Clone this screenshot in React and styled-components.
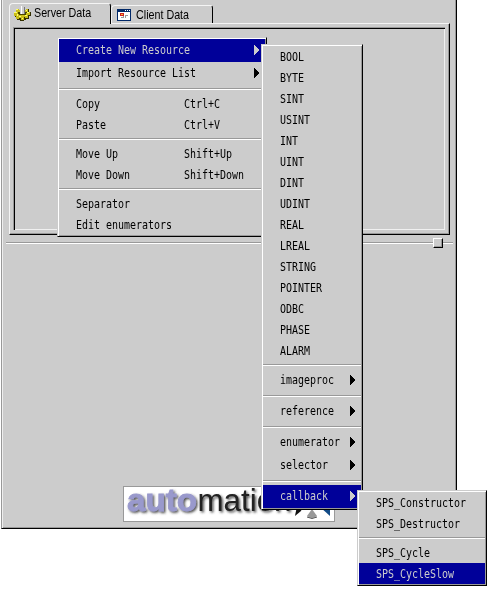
import React from 'react';
import styled, { createGlobalStyle } from 'styled-components';

const face = '#cccccc';
const shade = '#999999';
const navy = '#000099';

const GlobalStyle = createGlobalStyle`
  * { box-sizing: border-box; }
  body { margin: 0; background: #fff; overflow: hidden; }
`;

const Desktop = styled.main`
  position: relative;
  width: 492px;
  height: 589px;
  overflow: hidden;
  padding-left: 1px;
  background: #fff;
`;

const Window = styled.section`
  display: flex;
  flex-direction: column;
  width: 456px;
  height: 529px;
  padding: 3px 5px 0 5px;
  background: ${face};
  border-left: 1px solid ${shade};
  border-right: 1px solid #000;
  border-bottom: 1px solid #000;
  box-shadow: inset 1px 0 0 #eee, inset -1px -1px 0 ${shade};
`;

const Tabs = styled.nav`
  display: flex;
  align-items: flex-end;
  height: 20px;
  margin-left: 2px;
`;

const Tab = styled.button`
  display: flex;
  align-items: center;
  width: ${(p) => p.$width}px;
  height: ${(p) => (p.$active ? 21 : 18)}px;
  margin: 0 0 ${(p) => (p.$active ? -1 : 0)}px;
  padding: 0 0 ${(p) => (p.$active ? 2 : 0)}px ${(p) => (p.$active ? 4 : 5)}px;
  gap: ${(p) => (p.$active ? 3 : 5)}px;
  background: ${face};
  border: 1px solid #f4f4f4;
  border-right-color: #000;
  border-bottom: 0;
  border-radius: 4px 3px 0 0;
  z-index: ${(p) => (p.$active ? 1 : 0)};
`;

const TabLabel = styled.span`
  font: 13px/16px "Liberation Sans", sans-serif;
  color: #000;
  white-space: nowrap;
  transform: scaleX(0.825);
  transform-origin: left center;
`;

const Sheet = styled.div`
  width: 441px;
  height: 212px;
  margin-left: 2px;
  padding: 3px;
  border: 1px solid #f4f4f4;
  border-right-color: #000;
  border-bottom-color: #000;
  box-shadow: inset -1px -1px 0 ${shade};
`;

const Well = styled.div`
  width: 432px;
  height: 203px;
  border: 1px solid ${shade};
  border-right: 0;
  border-bottom: 0;
  box-shadow: inset 1px 1px 0 #000, inset -1px -1px 0 #f0f0f0;
`;

const Splitter = styled.div`
  display: flex;
  align-items: center;
  margin: 3px 2px 0 -1px;
  height: 10px;
  width: 447px;
`;

const Groove = styled.hr`
  flex: ${(p) => (p.$width ? `0 0 ${p.$width}px` : '1')};
  height: 2px;
  margin: 0;
  border: 0;
  border-top: 1px solid ${shade};
  background: #fff;
`;

const Handle = styled.span`
  width: 10px;
  height: 10px;
  border: 1px solid #fff;
  border-right-color: #000;
  border-bottom-color: #000;
  box-shadow: inset -1px -1px 0 ${shade};
`;

const LogoPlate = styled.div`
  width: 212px;
  height: 36px;
  margin: auto 0 6px 116px;
  border: 1px solid ${shade};
  background: #fff;
`;

const MenuBox = styled.div`
  position: absolute;
  left: ${(p) => p.$x}px;
  top: ${(p) => p.$y}px;
  width: ${(p) => p.$width}px;
  padding: 1px;
  background: ${face};
  border: 1px solid ${face};
  border-right-color: #000;
  border-bottom-color: #000;
  box-shadow: inset 1px 1px 0 #fff, inset -1px -1px 0 ${shade};
`;

const MenuRow = styled.div`
  display: flex;
  align-items: center;
  height: ${(p) => (p.$sub ? 23 : 21)}px;
  padding: 0 6px ${(p) => (p.$sub ? 1 : 0)}px 17px;
  color: ${(p) => (p.$active ? face : '#000')};
  background: ${(p) => (p.$active ? navy : 'transparent')};
`;

const MenuText = styled.span`
  flex: ${(p) => (p.$fixed ? '0 0 108px' : '1')};
  font: 10px/14px "DejaVu Sans Mono", monospace;
  letter-spacing: -0.02px;
  white-space: pre;
  transform: scaleY(1.24);
`;

const MenuRule = styled.div`
  height: 8px;
  padding-top: 3px;
  display: flex;
  flex-direction: column;
`;

const RuleLine = styled(Groove)`
  flex: 0 0 2px;
`;

const Arrow = () => (
  <svg width="5" height="10" viewBox="0 0 5 10" shapeRendering="crispEdges">
    <path d="M0 0h1v1h1v1h1v1h1v1h1v2h-1v1h-1v1h-1v1h-1v1h-1z" fill="currentColor" />
  </svg>
);

const GearIcon = () => (
  <svg width="17" height="15" viewBox="0 0 17 15" shapeRendering="crispEdges">
    <path d="M2 3h3v1h7V3h3v3h2v4h-2v3h-3v1h-2v1H6v-1H3v-3H1V6h1z" fill="#332f00" />
    <path d="M2 3h3v1h7V3h2v3h2v3h-2v3h-3v-1h-1v3H7v-2H5v1H2v-3H0V6h2z" fill="#c9bd18" />
    <path d="M2 3h2v1H2zM0 6h3v1H0zM3 8h1v2H3zM5 10h2v1H5zM11 9h2v1h-2zM13 6h2v1h-2zM8 12h1v1H8zM12 4h1v1h-1z" fill="#ffff70" />
    <path d="M4 6h9v1h-1v2H5V8H4z" fill="#4a4500" />
    <path d="M6 1h5v7H6z" fill="#777" />
    <path d="M6 0h4v8H6z" fill="#ccc" />
    <path d="M7 0h1v8H7z" fill="#fff" />
  </svg>
);

const FormIcon = () => (
  <svg width="14" height="12" viewBox="0 0 14 12" shapeRendering="crispEdges">
    <path d="M0 0h14v12H0z" fill="#002868" />
    <path d="M1 3h12v8H1z" fill="#fff" />
    <path d="M8 1h1v1H8zM10 1h1v1h-1zM12 1h1v1h-1z" fill="#fff" />
    <path d="M3 4h4v3H3z" fill="#cc2222" />
    <path d="M4 5h2v1H4z" fill="#ffb030" />
    <path d="M4 8h3v1H4zM6 7h1v1H6zM8 6h1v3H8zM9 6h2v1H9z" fill="#999" />
  </svg>
);

const Logo = () => (
  <svg width="210" height="34" viewBox="124 487 210 34">
    <defs>
      <filter id="shadow" x="-10%" y="-20%" width="120%" height="150%">
        <feDropShadow dx="1.5" dy="1.5" stdDeviation="0.9" floodColor="#333" floodOpacity="0.85" />
      </filter>
    </defs>
    <g fontFamily="Liberation Sans, Arial, sans-serif" fontSize="31" filter="url(#shadow)">
      <text x="127" y="511" fontWeight="700" textLength="70" lengthAdjust="spacingAndGlyphs" fill="#9999cc" stroke="#9999cc" strokeWidth=".8">auto</text>
      <text x="197.5" y="511" textLength="94" lengthAdjust="spacingAndGlyphs" fill="#222">mation</text>
    </g>
    <path d="M295 516l2-10h6l-2 5z" fill="#111" />
    <path d="M307 516l5-7 5 7q-5 4-10 0z" fill="#999" />
    <path d="M307 517q5 3 10 0" stroke="#555" fill="none" />
    <path d="M320 507h8l2 2v7z" fill="#124b87" />
  </svg>
);

const SUB = true;

const resourceMenu = [
  { label: 'Create New Resource', sub: SUB, active: true },
  { label: 'Import Resource List', sub: SUB },
  null,
  { label: 'Copy', keys: 'Ctrl+C' },
  { label: 'Paste', keys: 'Ctrl+V' },
  null,
  { label: 'Move Up', keys: 'Shift+Up' },
  { label: 'Move Down', keys: 'Shift+Down' },
  null,
  { label: 'Separator' },
  { label: 'Edit enumerators' },
];

const typeMenu = [
  ...['BOOL', 'BYTE', 'SINT', 'USINT', 'INT', 'UINT', 'DINT', 'UDINT', 'REAL', 'LREAL',
    'STRING', 'POINTER', 'ODBC', 'PHASE', 'ALARM'].map((label) => ({ label })),
  null,
  { label: 'imageproc', sub: SUB },
  null,
  { label: 'reference', sub: SUB },
  null,
  { label: 'enumerator', sub: SUB },
  { label: 'selector', sub: SUB },
  null,
  { label: 'callback', sub: SUB, active: true },
];

const callbackMenu = [
  { label: 'SPS_Constructor' },
  { label: 'SPS_Destructor' },
  null,
  { label: 'SPS_Cycle' },
  { label: 'SPS_CycleSlow', active: true },
];

const Menu = ({ items, x, y, width }) => (
  <MenuBox $x={x} $y={y} $width={width}>
    {items.map((item, i) =>
      item ? (
        <MenuRow key={i} $sub={item.sub} $active={item.active}>
          <MenuText $fixed={!!item.keys}>{item.label}</MenuText>
          {item.keys && <MenuText>{item.keys}</MenuText>}
          {item.sub && <Arrow />}
        </MenuRow>
      ) : (
        <MenuRule key={i}><RuleLine /></MenuRule>
      )
    )}
  </MenuBox>
);

export default function App() {
  return (
    <>
      <GlobalStyle />
      <Desktop>
        <Window>
          <Tabs>
            <Tab $width={102} $active>
              <GearIcon />
              <TabLabel>Server Data</TabLabel>
            </Tab>
            <Tab $width={102}>
              <FormIcon />
              <TabLabel>Client Data</TabLabel>
            </Tab>
          </Tabs>
          <Sheet><Well /></Sheet>
          <Splitter>
            <Groove />
            <Handle />
            <Groove $width={10} />
          </Splitter>
          <LogoPlate><Logo /></LogoPlate>
        </Window>
        <Menu items={resourceMenu} x={57} y={37} width={210} />
        <Menu items={typeMenu} x={261} y={44} width={102} />
        <Menu items={callbackMenu} x={357} y={490} width={130} />
      </Desktop>
    </>
  );
}
